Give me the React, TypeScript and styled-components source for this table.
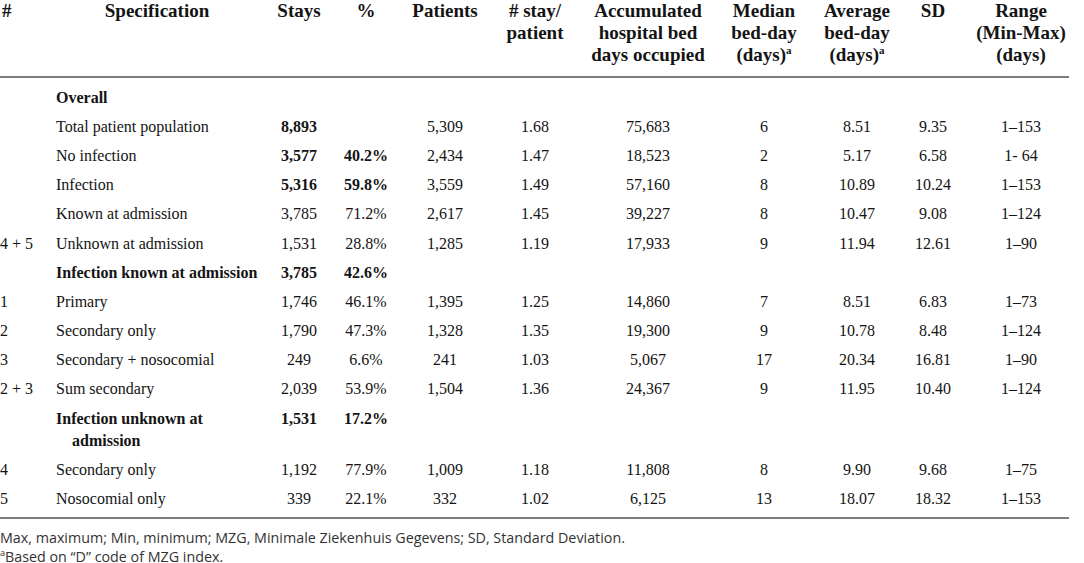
import React from "react";
import styled, { createGlobalStyle } from "styled-components";

const Global = createGlobalStyle`
  html, body { margin: 0; padding: 0; background: #ffffff; }
  body { font-family: "Liberation Serif", "Times New Roman", serif; color: #141414; }
`;

const Page = styled.div`
  width: 1084px;
`;

const Table = styled.table`
  width: 1069px;
  border-collapse: collapse;
  table-layout: fixed;
`;

const Col = styled.col<{ $w: number }>`
  width: ${(p) => p.$w}px;
`;

const HeadRow = styled.tr`
  border-bottom: 2px solid #7d7d7d;
`;

const BodyRow = styled.tr<{ $last?: boolean }>`
  border-bottom: ${(p) => (p.$last ? "2px solid #7d7d7d" : "none")};
`;

const Th = styled.th<{ $align?: string; $pl?: number }>`
  font-weight: 700;
  font-size: 19px;
  line-height: 22px;
  vertical-align: top;
  text-align: ${(p) => p.$align || "center"};
  padding: 0 0 10px ${(p) => p.$pl || 0}px;
  white-space: nowrap;
`;

const Td = styled.td<{
  $bold?: boolean;
  $align?: string;
  $pl?: number;
  $indent?: number;
  $top?: number;
  $bottom?: number;
}>`
  font-size: 16px;
  line-height: 22px;
  font-weight: ${(p) => (p.$bold ? 700 : 400)};
  text-align: ${(p) => p.$align || "center"};
  vertical-align: top;
  padding: ${(p) => 3.6 + (p.$top || 0)}px 0 ${(p) => 3.6 + (p.$bottom || 0)}px
    ${(p) => p.$pl || 0}px;
  text-indent: ${(p) => p.$indent || 0}px;
`;

const Sup = styled.sup`
  font-size: 11px;
  line-height: 0;
  vertical-align: baseline;
  position: relative;
  top: -0.65em;
`;

const Notes = styled.div`
  font-family: "Open Sans", "Noto Sans", sans-serif;
  font-size: 14.3px;
  line-height: 19px;
  color: #333333;
  padding-top: 9px;
`;

const NoteSup = styled.sup`
  font-size: 9px;
  line-height: 0;
  vertical-align: baseline;
  position: relative;
  top: -0.6em;
`;

type Row = {
  n: string;
  spec: string;
  stays: string;
  pct: string;
  patients: string;
  perPatient: string;
  acc: string;
  median: string;
  avg: string;
  sd: string;
  range: string;
  boldSpec?: boolean;
  boldStays?: boolean;
  boldPct?: boolean;
};

const rows: Row[] = [
  { n: "", spec: "Overall", stays: "", pct: "", patients: "", perPatient: "", acc: "", median: "", avg: "", sd: "", range: "", boldSpec: true },
  { n: "", spec: "Total patient population", stays: "8,893", pct: "", patients: "5,309", perPatient: "1.68", acc: "75,683", median: "6", avg: "8.51", sd: "9.35", range: "1–153", boldStays: true },
  { n: "", spec: "No infection", stays: "3,577", pct: "40.2%", patients: "2,434", perPatient: "1.47", acc: "18,523", median: "2", avg: "5.17", sd: "6.58", range: "1- 64", boldStays: true, boldPct: true },
  { n: "", spec: "Infection", stays: "5,316", pct: "59.8%", patients: "3,559", perPatient: "1.49", acc: "57,160", median: "8", avg: "10.89", sd: "10.24", range: "1–153", boldStays: true, boldPct: true },
  { n: "", spec: "Known at admission", stays: "3,785", pct: "71.2%", patients: "2,617", perPatient: "1.45", acc: "39,227", median: "8", avg: "10.47", sd: "9.08", range: "1–124" },
  { n: "4 + 5", spec: "Unknown at admission", stays: "1,531", pct: "28.8%", patients: "1,285", perPatient: "1.19", acc: "17,933", median: "9", avg: "11.94", sd: "12.61", range: "1–90" },
  { n: "", spec: "Infection known at admission", stays: "3,785", pct: "42.6%", patients: "", perPatient: "", acc: "", median: "", avg: "", sd: "", range: "", boldSpec: true, boldStays: true, boldPct: true },
  { n: "1", spec: "Primary", stays: "1,746", pct: "46.1%", patients: "1,395", perPatient: "1.25", acc: "14,860", median: "7", avg: "8.51", sd: "6.83", range: "1–73" },
  { n: "2", spec: "Secondary only", stays: "1,790", pct: "47.3%", patients: "1,328", perPatient: "1.35", acc: "19,300", median: "9", avg: "10.78", sd: "8.48", range: "1–124" },
  { n: "3", spec: "Secondary + nosocomial", stays: "249", pct: "6.6%", patients: "241", perPatient: "1.03", acc: "5,067", median: "17", avg: "20.34", sd: "16.81", range: "1–90" },
  { n: "2 + 3", spec: "Sum secondary", stays: "2,039", pct: "53.9%", patients: "1,504", perPatient: "1.36", acc: "24,367", median: "9", avg: "11.95", sd: "10.40", range: "1–124" },
  { n: "", spec: "Infection unknown at admission", stays: "1,531", pct: "17.2%", patients: "", perPatient: "", acc: "", median: "", avg: "", sd: "", range: "", boldSpec: true, boldStays: true, boldPct: true },
  { n: "4", spec: "Secondary only", stays: "1,192", pct: "77.9%", patients: "1,009", perPatient: "1.18", acc: "11,808", median: "8", avg: "9.90", sd: "9.68", range: "1–75" },
  { n: "5", spec: "Nosocomial only", stays: "339", pct: "22.1%", patients: "332", perPatient: "1.02", acc: "6,125", median: "13", avg: "18.07", sd: "18.32", range: "1–153" },
];

const widths = [52, 210, 74, 60, 98, 82, 144, 88, 98, 54, 109];

export default function App() {
  return (
    <Page>
      <Global />
      <Table>
        <colgroup>
          {widths.map((w, i) => (
            <Col key={i} $w={w} />
          ))}
        </colgroup>
        <thead>
          <HeadRow>
            <Th $align="left" $pl={2}>#</Th>
            <Th>Specification</Th>
            <Th>Stays</Th>
            <Th>%</Th>
            <Th>Patients</Th>
            <Th>
              # stay/
              <br />
              patient
            </Th>
            <Th>
              Accumulated
              <br />
              hospital bed
              <br />
              days occupied
            </Th>
            <Th>
              Median
              <br />
              bed-day
              <br />
              (days)<Sup>a</Sup>
            </Th>
            <Th>
              Average
              <br />
              bed-day
              <br />
              (days)<Sup>a</Sup>
            </Th>
            <Th>SD</Th>
            <Th $pl={13}>
              Range
              <br />
              (Min-Max)
              <br />
              (days)
            </Th>
          </HeadRow>
        </thead>
        <tbody>
          {rows.map((r, i) => {
            const first = i === 0;
            const last = i === rows.length - 1;
            const top = first ? 5 : 0;
            const bottom = last ? 3 : 0;
            return (
              <BodyRow key={i} $last={last}>
                <Td $align="left" $pl={0} $top={top} $bottom={bottom}>{r.n}</Td>
                <Td $align="left" $pl={20} $indent={-16} $bold={r.boldSpec} $top={top} $bottom={bottom}>
                  {r.spec}
                </Td>
                <Td $bold={r.boldStays} $top={top} $bottom={bottom}>{r.stays}</Td>
                <Td $bold={r.boldPct} $top={top} $bottom={bottom}>{r.pct}</Td>
                <Td $top={top} $bottom={bottom}>{r.patients}</Td>
                <Td $top={top} $bottom={bottom}>{r.perPatient}</Td>
                <Td $top={top} $bottom={bottom}>{r.acc}</Td>
                <Td $top={top} $bottom={bottom}>{r.median}</Td>
                <Td $top={top} $bottom={bottom}>{r.avg}</Td>
                <Td $top={top} $bottom={bottom}>{r.sd}</Td>
                <Td $pl={13} $top={top} $bottom={bottom}>{r.range}</Td>
              </BodyRow>
            );
          })}
        </tbody>
      </Table>
      <Notes>
        <div>Max, maximum; Min, minimum; MZG, Minimale Ziekenhuis Gegevens; SD, Standard Deviation.</div>
        <div>
          <NoteSup>a</NoteSup>Based on “D” code of MZG index.
        </div>
      </Notes>
    </Page>
  );
}
